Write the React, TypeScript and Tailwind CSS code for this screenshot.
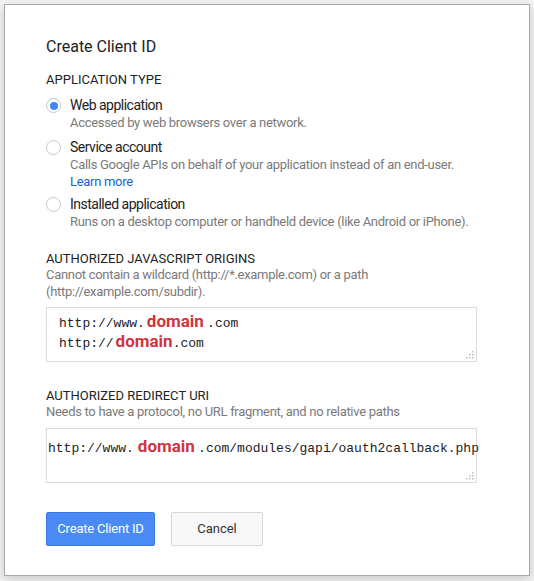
import React from 'react'

const sans = "font-['Roboto','Liberation_Sans',sans-serif]"
const mono = "font-['Liberation_Mono','Courier_New',monospace]"

function Grip() {
    return (
        <svg width="9" height="9" viewBox="0 0 9 9" className="absolute right-[2px] bottom-[2px]">
            {[
                [7, 1], [7, 4], [4, 4], [7, 7], [4, 7], [1, 7],
            ].map(([x, y], i) => (
                <rect key={i} x={x} y={y} width="1.5" height="1.5" fill="#bcbcbc" />
            ))}
        </svg>
    )
}

function Domain({ className = '' }: { className?: string }) {
    return (
        <span className={`${sans} font-bold text-[17px] leading-none text-[#d2343f] ${className}`}>domain</span>
    )
}

// sans-serif space, narrower than the mono one
const Sp = () => <span className={`${sans} text-[13px]`}> </span>

function Radio({ checked }: { checked?: boolean }) {
    return (
        <span className="w-[15px] h-[15px] rounded-full border border-[#c8c8c8] bg-white flex items-center justify-center shrink-0 mt-[2px]">
            {checked && <span className="w-[8px] h-[8px] rounded-full bg-[#4285f4]" />}
        </span>
    )
}

const options = [
    { label: 'Web application', desc: 'Accessed by web browsers over a network.', checked: true, gap: 'mt-[9px]' },
    { label: 'Service account', desc: 'Calls Google APIs on behalf of your application instead of an end-user.', link: 'Learn more', gap: 'mt-[7px]' },
    { label: 'Installed application', desc: 'Runs on a desktop computer or handheld device (like Android or iPhone).', gap: 'mt-[5px]' },
]

export default function App() {
    return (
        <div className={`w-[534px] h-[581px] bg-[#f3f3f3] pt-1 pl-1 overflow-hidden ${sans}`}>
            <div className="w-[526px] h-[572px] bg-white border border-[#a9a9a9] shadow-[0_3px_10px_rgba(0,0,0,0.18)] pl-[41px] pt-[32px]">
                <h1 className="text-[16px] leading-[20px] text-[#222] font-normal">Create Client ID</h1>

                <div className="mt-[16px] text-[13px] leading-[14px] text-[#222] uppercase">Application type</div>

                {options.map((o) => (
                    <div key={o.label} className={`flex gap-[9px] ${o.gap}`}>
                        <Radio checked={o.checked} />
                        <div>
                            <div className="text-[14px] leading-[18px] tracking-[-0.5px] text-[#222]">{o.label}</div>
                            <div className="text-[13px] leading-[17px] tracking-[-0.3px] text-[#7a7a7a]">{o.desc}</div>
                            {o.link && <div className="text-[13px] leading-[17px] tracking-[-0.3px] text-[#1a5fd0]">{o.link}</div>}
                        </div>
                    </div>
                ))}

                <div className="mt-[22px] text-[13px] leading-[14px] text-[#222] uppercase">Authorized JavaScript origins</div>
                <div className="text-[13px] leading-[17px] tracking-[-0.3px] text-[#7a7a7a] w-[400px]">
                    Cannot contain a wildcard (http://*.example.com) or a path (http://example.com/subdir).
                </div>

                <div className={`relative mt-[7px] w-[431px] h-[55px] border border-[#dcdcdc] pl-[12px] pt-[5px] text-[13px] leading-[20px] text-[#222] ${mono}`}>
                    <div className="h-[20px] whitespace-nowrap">http://www.<Domain className="ml-[2px]" /><Sp />.com</div>
                    <div className="h-[20px] whitespace-nowrap">http://<Domain className="ml-[2px]" />.com</div>
                    <Grip />
                </div>

                <div className="mt-[27px] text-[13px] leading-[14px] text-[#222] uppercase">Authorized redirect URI</div>
                <div className="text-[13px] leading-[17px] tracking-[-0.3px] text-[#7a7a7a]">
                    Needs to have a protocol, no URL fragment, and no relative paths
                </div>

                <div className={`relative mt-[8px] w-[431px] h-[55px] border border-[#dcdcdc] pl-[1px] pt-[9px] text-[13px] leading-[20px] text-[#222] ${mono}`}>
                    <div className="h-[20px] whitespace-nowrap">http://www.<Domain className="ml-[4px]" /><Sp />.com/modules/gapi/oauth2callback.php</div>
                    <Grip />
                </div>

                <div className="mt-[29px] flex gap-[16px]">
                    <button className="w-[109px] h-[34px] rounded-[2px] bg-[#4a8af4] border border-[#3b78e7] text-white text-[13px] tracking-[-0.2px]">
                        Create Client ID
                    </button>
                    <button className="w-[92px] h-[34px] rounded-[2px] bg-[#f8f8f8] border border-[#d6d6d6] text-[#333] text-[13px]">
                        Cancel
                    </button>
                </div>
            </div>
        </div>
    )
}
